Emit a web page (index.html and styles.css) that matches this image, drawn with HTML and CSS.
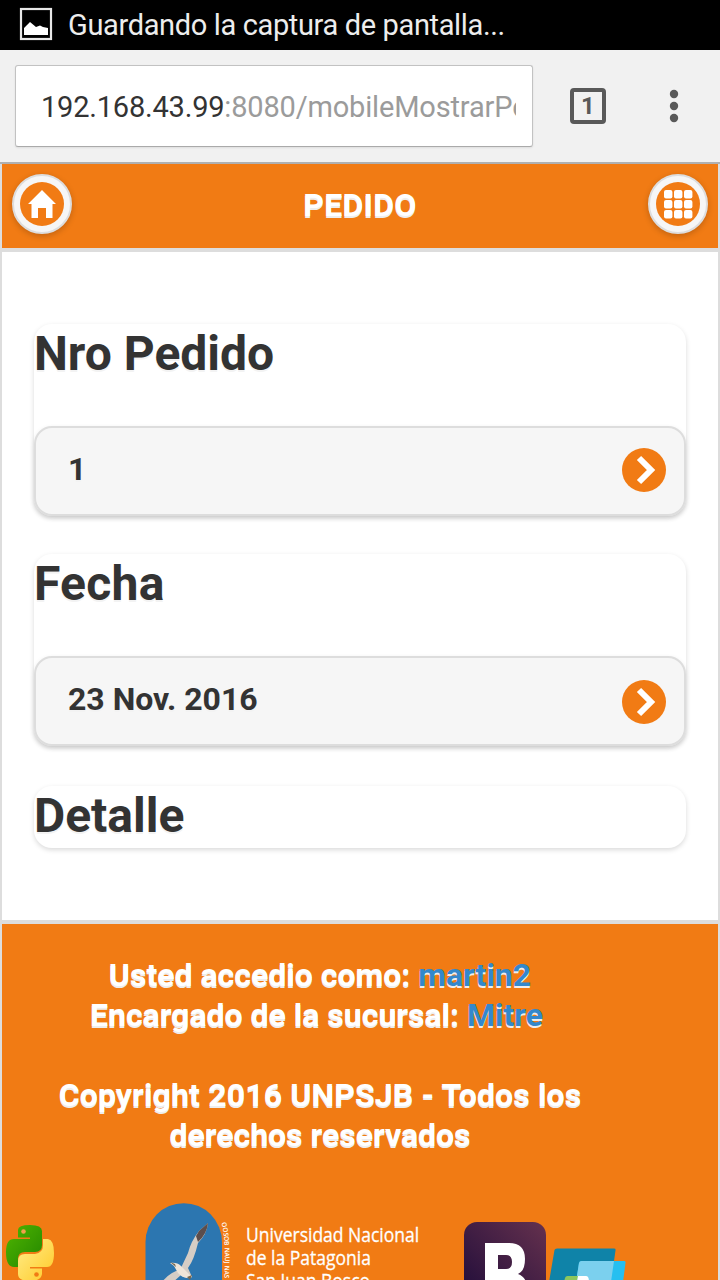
FILE: index.html
```html
<!DOCTYPE html>
<html lang="es">
<head>
<meta charset="utf-8">
<title>Pedido</title>
<link rel="stylesheet" href="styles.css">
</head>
<body>
<div class="status">
  <svg class="status-icon" width="34" height="34" viewBox="0 0 34 34"><rect x="2" y="2" width="30" height="30" fill="none" stroke="#e8e8e8" stroke-width="2.2"/><path d="M5 28v-7l6-6 6 5 4-1.500 3 1.500 5 1v7z" fill="#fff"/></svg>
  <span class="status-text">Guardando la captura de pantalla...</span>
</div>
<div class="toolbar">
  <div class="url"><div class="url-text"><span class="host">192.168.43.99</span><span class="path">:8080/mobileMostrarPedido</span></div></div>
  <div class="tabs">1</div>
  <svg class="dots" width="10" height="34" viewBox="0 0 10 34"><g fill="#595959"><circle cx="5" cy="5" r="4.200"/><circle cx="5" cy="17" r="4.200"/><circle cx="5" cy="29" r="4.200"/></g></svg>
</div>
<div class="page">
  <header class="header">
    <a class="round"><svg width="60" height="60" viewBox="0 0 60 60"><circle cx="30" cy="30" r="22" fill="#f17b14"/><path d="M30 16 44 30H40.500V44H34V34H26V44H19.500V30H16z" fill="#fff"/></svg></a>
    <h1 class="title">PEDIDO</h1>
    <a class="round"><svg width="60" height="60" viewBox="0 0 60 60"><circle cx="30" cy="30" r="22" fill="#f17b14"/><g fill="#fff"><rect x="16" y="16" width="8.400" height="8.400" rx="2"/><rect x="26" y="16" width="8.400" height="8.400" rx="2"/><rect x="36" y="16" width="8.400" height="8.400" rx="2"/><rect x="16" y="26" width="8.400" height="8.400" rx="2"/><rect x="26" y="26" width="8.400" height="8.400" rx="2"/><rect x="36" y="26" width="8.400" height="8.400" rx="2"/><rect x="16" y="36" width="8.400" height="8.400" rx="2"/><rect x="26" y="36" width="8.400" height="8.400" rx="2"/><rect x="36" y="36" width="8.400" height="8.400" rx="2"/></g></svg></a>
  </header>
  <main class="content">
    <section class="group">
      <h2 class="heading">Nro Pedido</h2>
      <a class="row"><span class="value">1</span><svg class="arrow" width="44" height="44" viewBox="0 0 44 44"><circle cx="22" cy="22" r="22" fill="#f17b14"/><path d="M17 10 29 22 17 34" fill="none" stroke="#fff" stroke-width="6"/></svg></a>
    </section>
    <section class="group">
      <h2 class="heading fecha">Fecha</h2>
      <a class="row row-low"><span class="value">23 Nov. 2016</span><svg class="arrow" width="44" height="44" viewBox="0 0 44 44"><circle cx="22" cy="22" r="22" fill="#f17b14"/><path d="M17 10 29 22 17 34" fill="none" stroke="#fff" stroke-width="6"/></svg></a>
    </section>
    <section class="group last">
      <h2 class="heading short">Detalle</h2>
    </section>
  </main>
  <footer class="footer">
    <div class="notice">
      <div>Usted accedio como: <a class="link">martin2</a></div>
      <div class="branch">Encargado de la sucursal: <a class="link">Mitre</a></div>
      <div class="copy">Copyright 2016 UNPSJB - Todos los</div>
      <div>derechos reservados</div>
    </div>
    <div class="logos">
      <svg class="logo-py" width="48" height="58" viewBox="0 0 48 58">
        <defs><linearGradient id="g" x2="1" y2="1"><stop offset="0" stop-color="#50b500"/><stop offset="1" stop-color="#238600"/></linearGradient><linearGradient id="y" x2="1" y2="1"><stop offset="0" stop-color="#ffee8a"/><stop offset="1" stop-color="#ffc928"/></linearGradient></defs>
        <path d="M12 13V5Q12 0 24 0Q36 0 36 6V20Q36 27 29 27H19Q12 27 12 34V42H8Q0 42 0 27Q0 14 8 14H24V12.500H12z" fill="url(#g)"/>
        <circle cx="17.500" cy="6.500" r="2.300" fill="#f2a14a"/>
        <path d="M37 14H42Q48 15 48 28Q48 42 41 42H24V43.500H36V49Q35 56 24 56Q12 56 12 49V36Q12 29 19 29H29Q37 28 37 20z" fill="url(#y)"/>
        <circle cx="30.500" cy="49.500" r="2.300" fill="#f17b14"/>
      </svg>
      <svg class="logo-unp" width="90" height="80" viewBox="0 0 90 80">
        <path d="M.5 110V39A38.200 38.800 0 0 1 77 39V110z" fill="#2c76b0"/>
        <path d="M16 80Q26 68 35 67L43 50Q46 38 54 28L63 20Q62 31 53 40Q49 57 43 65L47 74Q42 77 36 72L27 80z" fill="#d5cdc5"/>
        <path d="M54 28 63 20Q62 31 53 39L51 33z" fill="#5b4d4c"/>
        <path d="M25 60Q32 59 36 63L47 74Q39 77 33 70L29 63z" fill="#eee5d9"/>
        <path d="M25 59 30 61 31 64zM42 74 47 72 45 77z" fill="#756751"/>
        <path id="seal" d="M76.500 20Q82 40 78.500 86" fill="none"/>
        <text class="seal"><textPath href="#seal">OOSOB NAUJ NAS AINO</textPath></text>
      </svg>
      <div class="unp-name"><div>Universidad Nacional</div><div>de la Patagonia</div><div>San Juan Bosco</div></div>
      <svg class="logo-b" width="82" height="60" viewBox="0 0 82 60">
        <defs><linearGradient id="p" x1="0" y1="1" x2="1" y2="0"><stop offset="0" stop-color="#1d0b39"/><stop offset="1" stop-color="#65314e"/></linearGradient></defs>
        <rect width="82" height="82" rx="13" fill="url(#p)"/>
        <path fill-rule="evenodd" d="M21 21H45Q61 21 61 37Q61 49 54 52Q62 55 63 64H21zM34 33V47H42Q48 47 48 40Q48 33 42 33zM34 58V64H50Q49 58 42 58z" fill="#fff"/>
      </svg>
      <svg class="logo-sq" width="77" height="34" viewBox="0 0 77 34">
        <path d="M5.500 2Q6 .5 8 .5H65Q67 .5 66.500 2.500L62 34H0z" fill="#0f83a8"/>
        <path d="M30 15Q30.500 13 32.500 13H75Q77 13 76.500 15L74 34H27z" fill="#26bff0"/>
        <path d="M30 15Q30.500 13 32.500 13H65L62 34H27z" fill="#7bd0ee"/>
        <path d="M16 30Q16.500 28 18.500 28H29L28 34H15z" fill="#8cc65d"/>
        <path d="M29 28H37Q40 28 40 34H28z" fill="#fff"/>
      </svg>
    </div>
  </footer>
</div>
</body>
</html>
```

FILE: styles.css
```css
* { box-sizing: border-box; }
html, body { margin: 0; padding: 0; }
body { width: 720px; height: 1280px; overflow: hidden; font-family: Roboto, "Liberation Sans", sans-serif; color: #333; background: #fff; }
svg { display: block; flex: none; }
span, h1 { white-space: nowrap; }

.status { height: 50px; background: #000; display: flex; align-items: center; padding: 0 0 2px 19px; }
.status-text { margin-left: 15px; padding-top: 1px; font-size: 29px; letter-spacing: -.36px; color: #ededed; }

.toolbar { height: 114px; background: #f1f1f1; border-bottom: 2px solid #b0b0b0; display: flex; align-items: center; padding-left: 15px; }
.url { width: 518px; height: 82px; background: #fff; border: 1px solid #c2c2c2; border-bottom-color: #aaa; border-radius: 3px; box-shadow: 0 1px 2px #ddd; padding: 2px 16px 0 25px; display: flex; align-items: center; }
.url-text { width: 476px; overflow: hidden; white-space: nowrap; font-size: 29px; }
.host { color: #333; letter-spacing: -.2px; }
.path { color: #9b9b9b; letter-spacing: -.17px; }
.tabs { width: 36px; height: 36px; margin-left: 37px; border: 4px solid #595959; border-radius: 4px; color: #595959; font-size: 24px; font-weight: 700; line-height: 29px; text-align: center; }
.dots { margin-left: 63px; }

.page { height: 1116px; border: solid #ddd; border-width: 0 2px; }
.header { height: 88px; background: #f17b14; border-bottom: 4px solid #ddd; display: flex; justify-content: space-between; align-items: flex-start; padding: 10px; }
.round { width: 60px; height: 60px; border-radius: 50%; background: #f6f6f6; border: 2px solid #ddd; box-shadow: 0 2px 6px rgba(0, 0, 0, .2); display: flex; align-items: center; justify-content: center; }
.title { margin: 12px 0 0; font-size: 32px; line-height: 38px; letter-spacing: .3px; color: #fff; text-shadow: 0 2px 0 #eee; }

.content { height: 668px; padding: 72px 32px 0; }
.group { height: 192px; margin-bottom: 38px; border-radius: 18px; box-shadow: 0 2px 5px rgba(0, 0, 0, .15); }
.group + .group { margin-bottom: 40px; }
.group.last { height: 62px; }
.heading { height: 102px; margin: 0; padding-top: 1px; font-size: 48px; line-height: 58px; text-shadow: 0 2px 0 #f3f3f3; }
.heading.fecha { letter-spacing: .25px; }
.heading.short { height: 62px; }
.row { height: 90px; border: 2px solid #ddd; border-radius: 18px; background: #f6f6f6; box-shadow: 0 2px 5px rgba(0, 0, 0, .1); display: flex; justify-content: space-between; align-items: flex-start; padding: 20px 18px 0 32px; }
.row-low .arrow { margin-top: 2px; }
.value { font-size: 32px; font-weight: 700; line-height: 42px; text-shadow: 0 2px 0 #f3f3f3; }

.footer { height: 360px; background: #f17b14; border-top: 4px solid #ddd; overflow: hidden; }
.notice { width: 636px; height: 279px; padding-top: 31px; text-align: center; font-size: 32px; font-weight: 700; line-height: 40px; color: #fff; text-shadow: 0 2px 0 #eee; }
.branch { padding-right: 7px; }
.copy { margin-top: 40px; letter-spacing: .14px; }
.link { color: #3388cc; }
.logos { display: flex; align-items: flex-start; }
.logo-py { margin: 22px 0 0 4px; }
.logo-unp { margin-left: 91px; }
.seal { font: 600 6.500px "Open Sans", sans-serif; fill: #fff; }
.unp-name { width: 217px; margin: 20px 0 0 11px; font: 20px/23px "Open Sans", sans-serif; color: #fff; white-space: nowrap; transform: scaleX(.875); transform-origin: 0 0; -webkit-text-stroke: .3px #fff; }
.logo-b { margin: 19px 0 0 1px; }
.logo-sq { margin: 45px 0 0 3px; }
```
